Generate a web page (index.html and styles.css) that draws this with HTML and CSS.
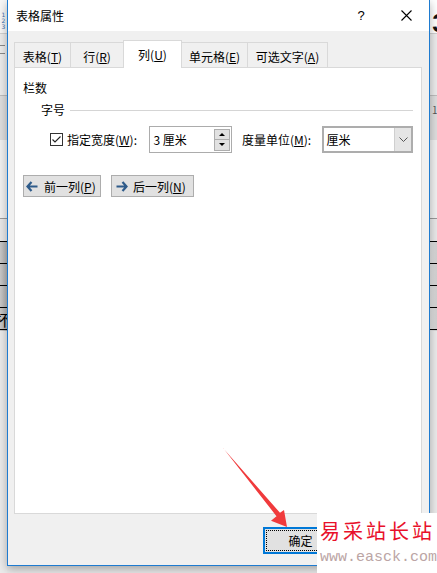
FILE: index.html
```html
<!DOCTYPE html>
<html lang="zh-CN">
<head>
  <meta charset="UTF-8">
  <title>表格属性</title>
  <link rel="stylesheet" href="styles.css">
</head>
<body>
  <div class="desk">
    <!-- 背后的 Word 文档边缘 -->
    <div class="doc-left">
      <div class="ruler-top"><span>1</span><span>2</span><span>3</span></div>
      <div class="band b-line"></div>
      <div class="band b-light"><i class="menu-mark"></i></div>
      <div class="band b-dark-line"></div>
      <div class="band b-mid"></div>
      <div class="band b-pale"></div>
      <div class="band b-gray-line"></div>
      <div class="band b-row-light"></div>
      <div class="table-rows"><span class="cut-char">杯</span></div>
      <div class="band b-rest"></div>
    </div>
    <div class="doc-right">
      <div class="ruler-top"><b class="big-three">3</b></div>
      <div class="band b-line"></div>
      <div class="band b-light"></div>
      <div class="band b-dark-line"></div>
      <div class="band b-mid"><span class="cut-num">1</span></div>
      <div class="band b-pale"></div>
      <div class="band b-gray-line"></div>
      <div class="band b-row-light"></div>
      <div class="table-rows"></div>
      <div class="band b-rest"></div>
    </div>

    <div class="dialog">
      <div class="titlebar">
        <span class="title">表格属性</span>
        <span class="tb-help">?</span>
        <span class="tb-close">
          <svg width="11" height="11" viewBox="0 0 11 11"><path d="M0.5 0.5 L10.5 10.5 M10.5 0.5 L0.5 10.5" stroke="#000" stroke-width="1.1" fill="none"/></svg>
        </span>
      </div>

      <div class="dlg-body">
        <div class="tabs">
          <div class="tab tab-table">表格(<u>T</u>)</div>
          <div class="tab tab-row">行(<u>R</u>)</div>
          <div class="tab tab-col active">列(<u>U</u>)</div>
          <div class="tab tab-cell">单元格(<u>E</u>)</div>
          <div class="tab tab-alt">可选文字(<u>A</u>)</div>
        </div>

        <div class="panel">
          <div class="sec-title">栏数</div>
          <div class="group-head"><span>字号</span><i class="rule"></i></div>

          <div class="width-row">
            <span class="check">
              <svg width="13" height="13" viewBox="0 0 13 13"><rect x="0.5" y="0.5" width="12" height="12" fill="#fff" stroke="#333"/><path d="M2.5 6.5 L5 9 L10.5 3.5" stroke="#222" stroke-width="1.1" fill="none"/></svg>
            </span>
            <span class="lbl lbl-width">指定宽度(<u>W</u>):</span>
            <div class="spin-input">
              <span class="val">3 厘米</span>
              <div class="spin">
                <b class="spin-btn"><i class="tri-up"></i></b>
                <b class="spin-btn"><i class="tri-down"></i></b>
              </div>
            </div>
            <span class="lbl lbl-unit">度量单位(<u>M</u>):</span>
            <div class="combo">
              <span class="val">厘米</span>
              <span class="drop">
                <svg width="9" height="5" viewBox="0 0 9 5"><path d="M0.5 0.5 L4.5 4.5 L8.5 0.5" stroke="#555" fill="none"/></svg>
              </span>
            </div>
          </div>

          <div class="nav-row">
            <button class="nav-btn btn-prev">
              <svg width="12" height="11" viewBox="0 0 12 11"><path d="M5.5 1 L1.5 5.5 L5.5 10 M1.5 5.5 H11.5" stroke="#2e5b8a" stroke-width="2.2" fill="none"/></svg>
              <span class="btn-text">前一列(<u>P</u>)</span>
            </button>
            <button class="nav-btn btn-next">
              <svg width="12" height="11" viewBox="0 0 12 11"><path d="M6.5 1 L10.5 5.5 L6.5 10 M10.5 5.5 H0.5" stroke="#2e5b8a" stroke-width="2.2" fill="none"/></svg>
              <span class="btn-text">后一列(<u>N</u>)</span>
            </button>
          </div>
        </div>

        <div class="footer">
          <button class="dlg-btn ok-btn"><span class="focus">确定</span></button>
          <button class="dlg-btn">取消</button>
        </div>
      </div>
    </div>

    <!-- 红色箭头标注 -->
    <svg class="arrow" width="437" height="573" viewBox="0 0 437 573">
      <polygon points="222.5,447.5 280,512.8 284,510 287,527 271,520.8 276.5,516.2 223.5,448.5" fill="#f03a3c"/>
    </svg>

    <div class="watermark">
      <div class="wm-cn">易采站长站</div>
      <div class="wm-url">www.easck.com</div>
    </div>
  </div>
</body>
</html>
```

FILE: styles.css
```css
body {
  margin: 0;
  font-family: "Noto Sans CJK SC", "Noto Sans", sans-serif;
  font-size: 12px;
  color: #000;
}
.desk {
  position: relative;
  width: 437px;
  height: 573px;
  overflow: hidden;
  background: #e9e9e9;
}

/* Word document edges */
.doc-left, .doc-right {
  position: absolute;
  top: 0;
  width: 7px;
  height: 573px;
  display: flex;
  flex-direction: column;
  overflow: hidden;
}
.doc-left { left: 0; }
.doc-right { left: 430px; }
.ruler-top {
  height: 33px;
  background: #f7f7f7;
  display: flex;
  flex-direction: column;
  align-items: center;
  padding-top: 12px;
  box-sizing: border-box;
}
.doc-left .ruler-top span {
  font-family: "DejaVu Sans", sans-serif;
  font-size: 6px;
  line-height: 6px;
  color: #3c6fb0;
}
.doc-right .ruler-top { background: #fff; }
.big-three {
  font-family: "Liberation Sans", sans-serif;
  font-size: 26px;
  line-height: 22px;
  margin-left: 12px;
  color: #111;
}
.band { flex: none; }
.b-line { height: 1px; background: #d0d0d0; }
.b-light { height: 61px; background: #ececec; position: relative; }
.menu-mark {
  position: absolute;
  left: 0;
  top: 11px;
  width: 5px;
  height: 7px;
  border-top: 1px solid #888;
  border-bottom: 1px solid #888;
}
.b-dark-line { height: 1px; background: #bdbdbd; }
.b-mid { height: 44px; background: #dedede; position: relative; }
.cut-num {
  position: absolute;
  left: 2px;
  top: 6px;
  font-size: 10px;
  color: #555;
}
.b-pale { height: 78px; background: #f1f1f1; }
.b-gray-line { height: 1px; background: #999; }
.b-row-light { height: 22px; background: #e9e9e9; }
.table-rows {
  flex: none;
  height: 90px;
  position: relative;
  background:
    repeating-linear-gradient(to bottom, #000 0, #000 1px, transparent 1px, transparent 22px),
    linear-gradient(to right, #c9c9c9, #b2b2b2);
}
.doc-right .table-rows {
  background:
    repeating-linear-gradient(to bottom, #000 0, #000 1px, transparent 1px, transparent 22px),
    linear-gradient(to right, #e6e6e6, #d0d0d0);
}
.cut-char {
  position: absolute;
  left: -6px;
  top: 67px;
  font-size: 16px;
  line-height: 22px;
}
.b-rest { flex: 1; background: #ebebeb; }

/* Dialog */
.dialog {
  position: relative;
  z-index: 1;
  margin-left: 7px;
  width: 423px;
  height: 566px;
  box-sizing: border-box;
  border: 1px solid #1e7bd0;
  border-top: none;
  background: #f0f0f0;
  box-shadow: 0 3px 9px rgba(0, 0, 0, 0.3);
  display: flex;
  flex-direction: column;
}
.titlebar {
  height: 31px;
  background: #fff;
  display: flex;
  align-items: center;
  padding-left: 8px;
  flex: none;
}
.title { flex: 1; }
.tb-help {
  width: 30px;
  text-align: center;
  font-family: "Liberation Sans", sans-serif;
  font-size: 13px;
}
.tb-close {
  width: 44px;
  margin-left: 8px;
  display: flex;
  justify-content: center;
  margin-right: 1px;
}
.dlg-body {
  flex: 1;
  display: flex;
  flex-direction: column;
  padding: 9px 7px 0 6px;
}

/* Tabs */
.tabs {
  display: flex;
  align-items: flex-end;
  height: 27px;
  flex: none;
  position: relative;
  z-index: 1;
}
.tab {
  height: 25px;
  box-sizing: border-box;
  border: 1px solid #d9d9d9;
  border-bottom: none;
  margin-right: -1px;
  display: flex;
  align-items: center;
  justify-content: center;
  background: #f0f0f0;
  padding-top: 2px;
}
.tab-table { width: 57px; }
.tab-row { width: 54px; }
.tab-col { width: 59px; }
.tab-cell { width: 67px; }
.tab-alt { width: 81px; }
.tab.active {
  height: 28px;
  background: #fff;
  margin-bottom: -1px;
  padding-top: 0;
  position: relative;
  z-index: 2;
}

/* Panel */
.panel {
  height: 447px;
  flex: none;
  box-sizing: border-box;
  background: #fff;
  border: 1px solid #d9d9d9;
  padding: 12px 8px 0 8px;
}
.sec-title { line-height: 16px; }
.group-head {
  display: flex;
  align-items: center;
  margin: 6px 0 0 18px;
  line-height: 16px;
}
.rule {
  flex: 1;
  height: 1px;
  background: #d5d5d5;
  margin-left: 5px;
}
.width-row {
  display: flex;
  align-items: center;
  margin: 8px 0 0 27px;
  height: 27px;
}
.check { display: flex; margin-right: 4px; }
.lbl { white-space: nowrap; }
.lbl-width { width: 83px; }
.lbl-unit { width: 80px; margin-left: 10px; }
.spin-input {
  width: 83px;
  height: 27px;
  box-sizing: border-box;
  border: 1px solid #acacac;
  display: flex;
  align-items: center;
  padding-left: 3px;
}
.spin-input .val { flex: 1; }
.spin {
  display: flex;
  flex-direction: column;
  margin-right: 1px;
}
.spin-btn {
  width: 16px;
  height: 11px;
  box-sizing: border-box;
  border: 1px solid #adadad;
  background: #e1e1e1;
  display: flex;
  align-items: center;
  justify-content: center;
}
.spin-btn + .spin-btn { border-top: none; }
.tri-up {
  border-left: 3px solid transparent;
  border-right: 3px solid transparent;
  border-bottom: 3px solid #000;
}
.tri-down {
  border-left: 3px solid transparent;
  border-right: 3px solid transparent;
  border-top: 3px solid #000;
}
.combo {
  width: 92px;
  height: 27px;
  box-sizing: border-box;
  border: 2px solid #adadad;
  display: flex;
  align-items: center;
  padding-left: 3px;
}
.combo .val { flex: 1; }
.drop {
  width: 16px;
  align-self: stretch;
  background: #e5e5e5;
  border-left: 1px solid #cfcfcf;
  display: flex;
  align-items: center;
  justify-content: center;
}
.nav-row {
  display: flex;
  gap: 10px;
  margin-top: 22px;
}
.nav-btn {
  height: 22px;
  box-sizing: border-box;
  border: 1px solid #adadad;
  background: #e1e1e1;
  font-family: inherit;
  font-size: 12px;
  color: #000;
  display: flex;
  align-items: center;
  gap: 6px;
  padding: 0 0 0 2px;
}
.btn-text { white-space: nowrap; }
.btn-prev { width: 78px; }
.btn-next { width: 83px; padding-left: 4px; gap: 5px; }

/* Footer buttons */
.footer {
  flex: 1;
  display: flex;
  justify-content: flex-end;
  align-items: flex-start;
  gap: 8px;
  padding: 13px 1px 0 0;
}
.dlg-btn {
  width: 75px;
  height: 27px;
  box-sizing: border-box;
  border: 1px solid #adadad;
  background: #e1e1e1;
  font-family: inherit;
  font-size: 12px;
  padding: 0;
}
.ok-btn {
  border: 2px solid #0078d7;
  padding: 1px;
}
.ok-btn .focus {
  display: flex;
  height: 100%;
  align-items: center;
  justify-content: center;
  border: 1px dotted #000;
  box-sizing: border-box;
}

/* Overlays */
.arrow {
  position: absolute;
  left: 0;
  top: 0;
  z-index: 3;
}
.watermark {
  position: absolute;
  left: 317px;
  top: 513px;
  width: 120px;
  height: 60px;
  background: #fff;
  z-index: 4;
  padding-left: 3px;
  box-sizing: border-box;
  overflow: hidden;
}
.wm-cn {
  color: #e8102a;
  font-size: 20px;
  line-height: 24px;
  letter-spacing: 3px;
  margin-top: 6px;
  white-space: nowrap;
}
.wm-url {
  color: #bba5a5;
  font-family: "Liberation Mono", monospace;
  font-size: 15px;
  line-height: 16px;
  margin-top: 7px;
  white-space: nowrap;
}
```
